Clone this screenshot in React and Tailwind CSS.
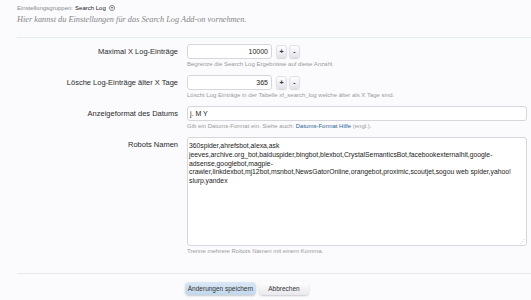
import React from 'react';

const robots = [
  '360spider,ahrefsbot,alexa,ask',
  'jeeves,archive.org_bot,baiduspider,bingbot,blexbot,CrystalSemanticsBot,facebookexternalhit,google-',
  'adsense,googlebot,magpie-',
  'crawler,linkdexbot,mj12bot,msnbot,NewsGatorOnline,orangebot,proximic,scoutjet,sogou web spider,yahoo!',
  'slurp,yandex',
];

const SpinButton = ({ children }) => (
  <button className="w-[11px] h-[13px] rounded-[3px] border border-[#e0e0e8] bg-gradient-to-b from-white to-[#e4e4ec] shadow-[0_1px_1px_rgba(0,0,0,0.15)] text-[7px] leading-[11px] text-[#333] font-bold text-center">
    {children}
  </button>
);

const Row = ({ label, children }) => (
  <div className="flex gap-[9px] items-start">
    <div className="w-[178px] shrink-0 text-right text-[7.5px] leading-[15px] text-[#2a2a2a]">{label}</div>
    <div className="w-[340px]">{children}</div>
  </div>
);

const Hint = ({ children }) => (
  <div className="mt-[1px] text-[6px] leading-[8px] text-[#9a9a9a] whitespace-nowrap">{children}</div>
);

const App = () => {
  return (
    <div
      className="w-[531px] h-[300px] overflow-hidden bg-[#fbfbfe]"
      style={{ fontFamily: '"Liberation Sans", Arial, sans-serif' }}
    >
      {/* kopfzeile */}
      <div className="pl-[17px] pt-[3px]">
        <div className="flex items-center gap-[2px] text-[6px] leading-[10px]">
          <span className="text-[#888]">Einstellungsgruppen:</span>
          <span className="text-[#222]">Search Log</span>
          <span className="ml-[1px] w-[6px] h-[6px] rounded-full border border-[#888] flex items-center justify-center">
            <span className="block w-0 h-0 border-l-[1.5px] border-r-[1.5px] border-t-[2px] border-l-transparent border-r-transparent border-t-[#555]" />
          </span>
        </div>
        <div
          className="mt-[2px] text-[8.3px] leading-[10px] italic text-[#858585]"
          style={{ fontFamily: '"Liberation Serif", "Times New Roman", serif' }}
        >
          Hier kannst du Einstellungen für das Search Log Add-on vornehmen.
        </div>
        <div className="mt-[12px] border-t border-[#e2eef0]" />
      </div>

      <div className="mt-[6px] flex flex-col gap-[7px]">
        <Row label="Maximal X Log-Einträge">
          <div className="flex items-center gap-[2px]">
            <div className="w-[85px] h-[15px] mr-[2px] bg-white border border-[#d6d6dc] rounded-[3px] text-right pr-[3px] text-[7px] leading-[13px] text-[#222]">
              10000
            </div>
            <SpinButton>+</SpinButton>
            <SpinButton>-</SpinButton>
          </div>
          <Hint>Begrenze die Search Log Ergebnisse auf diese Anzahl.</Hint>
        </Row>

        <Row label="Lösche Log-Einträge älter X Tage">
          <div className="flex items-center gap-[2px]">
            <div className="w-[85px] h-[15px] mr-[2px] bg-white border border-[#d6d6dc] rounded-[3px] text-right pr-[3px] text-[7px] leading-[13px] text-[#222]">
              365
            </div>
            <SpinButton>+</SpinButton>
            <SpinButton>-</SpinButton>
          </div>
          <Hint>Löscht Log Einträge in der Tabelle xf_search_log welche älter als X Tage sind.</Hint>
        </Row>

        <Row label="Anzeigeformat des Datums">
          <div className="h-[15px] bg-white border border-[#d6d6dc] rounded-[3px] pl-[2px] text-[7px] leading-[13px] text-[#222]">
            j. M Y
          </div>
          <Hint>
            Gib ein Datums-Format ein. Siehe auch: <span className="text-[#2b6493]">Datums-Format Hilfe</span> (engl.).
          </Hint>
        </Row>

        <Row label="Robots Namen">
          <div className="relative h-[109px] bg-white border border-[#d6d6dc] rounded-[3px] px-[1px] pt-[4px] text-[6.8px] leading-[8.8px] text-[#222]">
            {robots.map((line) => (
              <div key={line} className="whitespace-nowrap">{line}</div>
            ))}
            <span className="absolute right-[1px] bottom-[1px] text-[5px] leading-[5px] text-[#bbb]">⋰</span>
          </div>
          <Hint>Trenne mehrere Robots Namen mit einem Komma.</Hint>
        </Row>
      </div>

      <div className="ml-[17px] mt-[18px] border-t border-[#e6e8ee]" />

      <div className="mt-[8px] pl-[185px] flex gap-[3px]">
        <button className="w-[71px] h-[13px] rounded-[4px] bg-gradient-to-b from-[#dbe8f5] to-[#c2d7ec] shadow-[0_1px_2px_rgba(0,0,0,0.2)] text-[6.5px] leading-[13px] text-[#333]">
          Änderungen speichern
        </button>
        <button className="w-[50px] h-[13px] rounded-[4px] bg-gradient-to-b from-white to-[#e8e8ee] shadow-[0_1px_2px_rgba(0,0,0,0.2)] text-[6.5px] leading-[13px] text-[#333]">
          Abbrechen
        </button>
      </div>
    </div>
  );
};

export default App;
